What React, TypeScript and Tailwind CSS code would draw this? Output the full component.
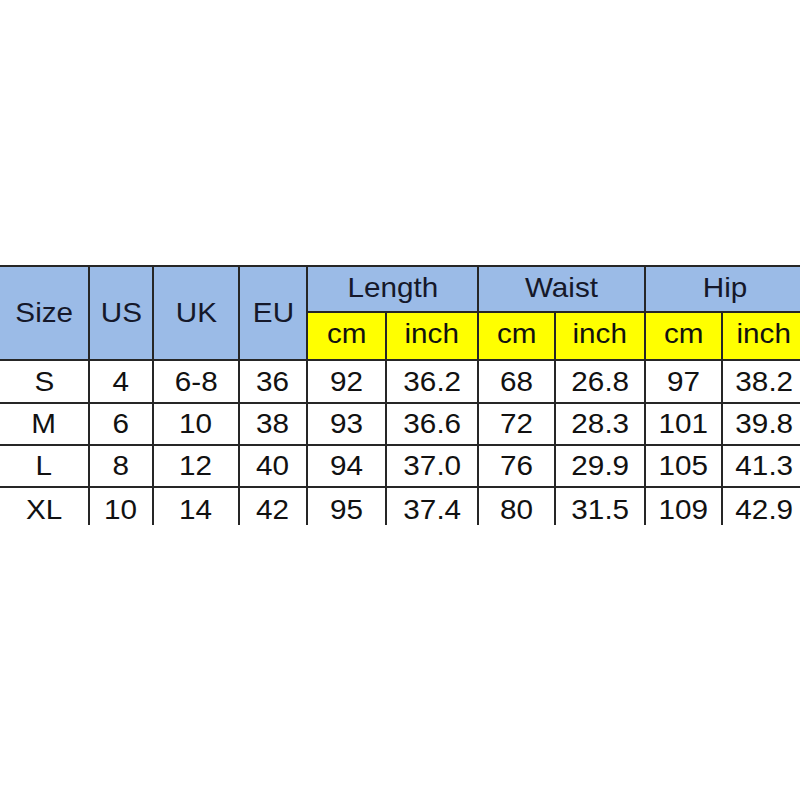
import React from "react";

const rows = [
  ["S", "4", "6-8", "36", "92", "36.2", "68", "26.8", "97", "38.2"],
  ["M", "6", "10", "38", "93", "36.6", "72", "28.3", "101", "39.8"],
  ["L", "8", "12", "40", "94", "37.0", "76", "29.9", "105", "41.3"],
  ["XL", "10", "14", "42", "95", "37.4", "80", "31.5", "109", "42.9"],
];

function T({ children }: { children: React.ReactNode }) {
  return <span className="inline-block scale-x-[1.06] whitespace-nowrap">{children}</span>;
}

export default function App() {
  return (
    <div
      className="w-[800px] h-[800px] overflow-hidden bg-white pt-[265px]"
      style={{ fontFamily: '"Liberation Sans", Arial, sans-serif' }}
    >
      <div className="grid w-max grid-cols-[88px_62px_84px_66px_77px_90px_75px_88px_75px_82px] grid-rows-[44px_46px_41px_40px_40px_37px] gap-[2px] bg-[#262626] pt-[2px] text-[28px] leading-none">
        {["Size", "US", "UK", "EU"].map((h) => (
          <div key={h} className="row-span-2 flex items-center justify-center bg-[#9bbbe7] text-[#15182a]">
            <T>{h}</T>
          </div>
        ))}
        {["Length", "Waist", "Hip"].map((h) => (
          <div key={h} className="col-span-2 flex items-center justify-center bg-[#9bbbe7] pb-[2px] text-[#15182a]">
            <T>{h}</T>
          </div>
        ))}
        {["cm", "inch", "cm", "inch", "cm", "inch"].map((h, i) => (
          <div key={i} className="flex items-center justify-center bg-[#ffff00] pb-[4px] text-[#111]">
            <T>{h}</T>
          </div>
        ))}
        {rows.map((r, ri) =>
          r.map((c, ci) => (
            <div
              key={ri + "-" + ci}
              className={
                "flex justify-center bg-white text-[#111] " +
                (ri === 3 ? "items-start pt-[8px]" : "items-center")
              }
            >
              <T>{c}</T>
            </div>
          ))
        )}
      </div>
    </div>
  );
}
